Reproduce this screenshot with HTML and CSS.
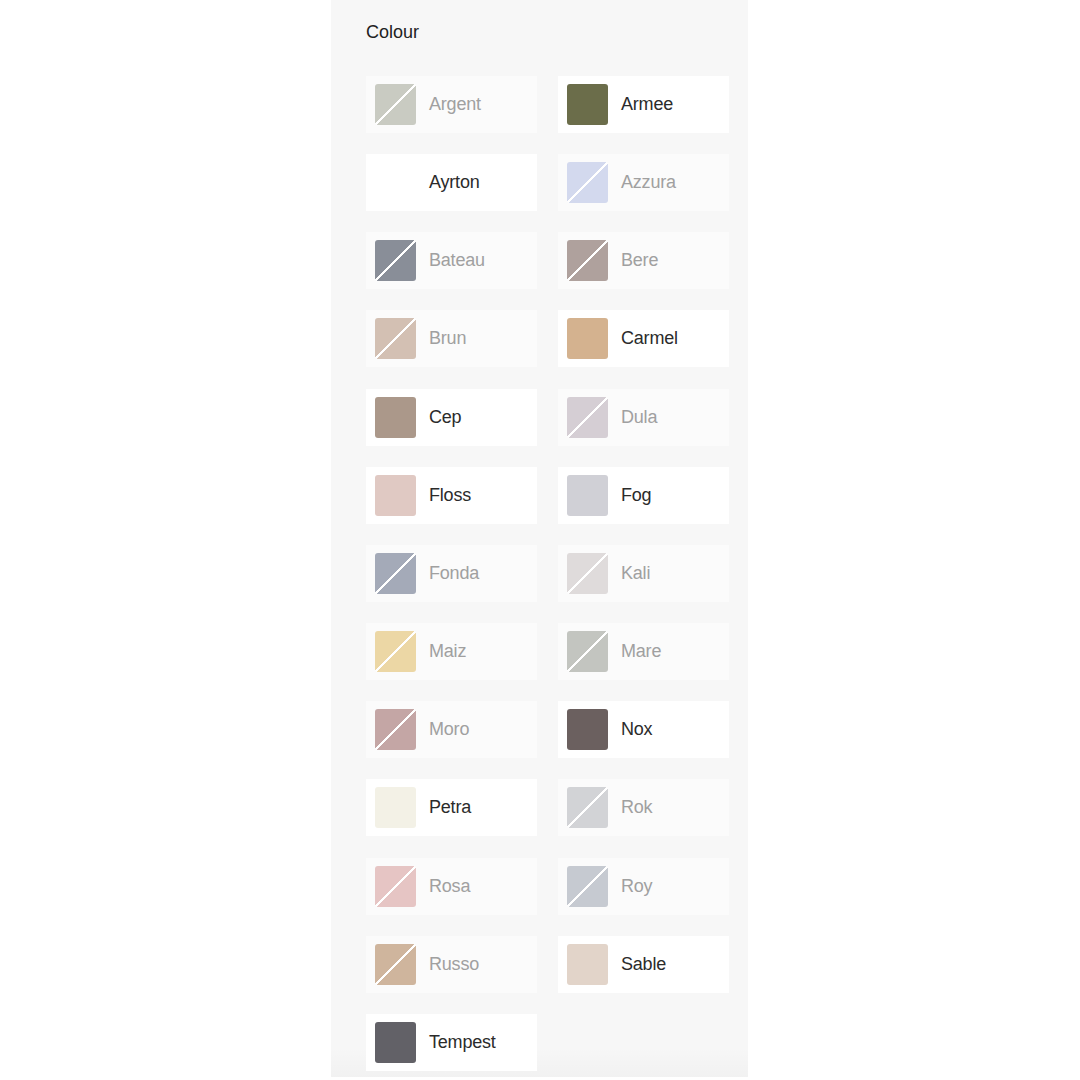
FILE: index.html
```html
<!DOCTYPE html>
<html lang="en">
<head>
    <meta charset="UTF-8">
    <meta name="viewport" content="width=device-width, initial-scale=1.0">
    <title>Colour</title>
    <link rel="stylesheet" href="styles.css">
</head>
<body>
    <section class="picker">
        <h2 class="picker-title">Colour</h2>

        <!-- Swatches: .sold-out ones get the struck-through look -->
        <ul class="swatch-grid">
            <li class="swatch-card sold-out"><span class="swatch" style="background-color: #c9cbc2;"></span><span class="swatch-name">Argent</span></li>
            <li class="swatch-card"><span class="swatch" style="background-color: #6b6d4a;"></span><span class="swatch-name">Armee</span></li>
            <li class="swatch-card"><span class="swatch" style="background-color: #ffffff;"></span><span class="swatch-name">Ayrton</span></li>
            <li class="swatch-card sold-out"><span class="swatch" style="background-color: #d3d9ee;"></span><span class="swatch-name">Azzura</span></li>
            <li class="swatch-card sold-out"><span class="swatch" style="background-color: #898e98;"></span><span class="swatch-name">Bateau</span></li>
            <li class="swatch-card sold-out"><span class="swatch" style="background-color: #afa19d;"></span><span class="swatch-name">Bere</span></li>
            <li class="swatch-card sold-out"><span class="swatch" style="background-color: #d3c0b3;"></span><span class="swatch-name">Brun</span></li>
            <li class="swatch-card"><span class="swatch" style="background-color: #d4b28f;"></span><span class="swatch-name">Carmel</span></li>
            <li class="swatch-card"><span class="swatch" style="background-color: #ab988a;"></span><span class="swatch-name">Cep</span></li>
            <li class="swatch-card sold-out"><span class="swatch" style="background-color: #d5ced4;"></span><span class="swatch-name">Dula</span></li>
            <li class="swatch-card"><span class="swatch" style="background-color: #e0c9c3;"></span><span class="swatch-name">Floss</span></li>
            <li class="swatch-card"><span class="swatch" style="background-color: #d0d0d6;"></span><span class="swatch-name">Fog</span></li>
            <li class="swatch-card sold-out"><span class="swatch" style="background-color: #a4aab8;"></span><span class="swatch-name">Fonda</span></li>
            <li class="swatch-card sold-out"><span class="swatch" style="background-color: #dfdbdb;"></span><span class="swatch-name">Kali</span></li>
            <li class="swatch-card sold-out"><span class="swatch" style="background-color: #ecd7a5;"></span><span class="swatch-name">Maiz</span></li>
            <li class="swatch-card sold-out"><span class="swatch" style="background-color: #c3c5c0;"></span><span class="swatch-name">Mare</span></li>
            <li class="swatch-card sold-out"><span class="swatch" style="background-color: #c4a6a5;"></span><span class="swatch-name">Moro</span></li>
            <li class="swatch-card"><span class="swatch" style="background-color: #6b605f;"></span><span class="swatch-name">Nox</span></li>
            <li class="swatch-card"><span class="swatch" style="background-color: #f3f1e6;"></span><span class="swatch-name">Petra</span></li>
            <li class="swatch-card sold-out"><span class="swatch" style="background-color: #d2d3d6;"></span><span class="swatch-name">Rok</span></li>
            <li class="swatch-card sold-out"><span class="swatch" style="background-color: #e6c5c4;"></span><span class="swatch-name">Rosa</span></li>
            <li class="swatch-card sold-out"><span class="swatch" style="background-color: #c6cad1;"></span><span class="swatch-name">Roy</span></li>
            <li class="swatch-card sold-out"><span class="swatch" style="background-color: #cfb59d;"></span><span class="swatch-name">Russo</span></li>
            <li class="swatch-card"><span class="swatch" style="background-color: #e2d4c9;"></span><span class="swatch-name">Sable</span></li>
            <li class="swatch-card"><span class="swatch" style="background-color: #626167;"></span><span class="swatch-name">Tempest</span></li>
        </ul>
    </section>
</body>
</html>
```

FILE: styles.css
```css
* {
    margin: 0;
    padding: 0;
    box-sizing: border-box;
    font-family: 'Liberation Sans', Arial, sans-serif;
}

html, body {
    width: 100%;
    height: 100%;
    overflow: hidden;
}

body {
    background: #fff;
    display: flex;
    justify-content: center;
}

/* Side panel holding the colour options */
.picker {
    width: 417px;
    min-height: 100%;
    margin-left: -1px;
    padding: 20px 19px 0 35px;
    background:
        linear-gradient(to bottom, rgba(0, 0, 0, 0) 97%, rgba(0, 0, 0, 0.025) 99.7%, #fff 99.7%),
        #f7f7f7;
}

.picker-title {
    font-size: 18px;
    font-weight: 400;
    line-height: 24px;
    color: #222;
    margin-bottom: 32px;
}

.swatch-grid {
    list-style: none;
    display: grid;
    grid-template-columns: 171px 171px;
    column-gap: 21px;
    row-gap: 21.17px;
}

.swatch-card {
    height: 57px;
    padding: 8px 9px;
    display: flex;
    align-items: center;
    gap: 13px;
    background: #fff;
}

.swatch {
    width: 41px;
    height: 41px;
    flex-shrink: 0;
    border-radius: 3px;
}

.swatch-name {
    font-size: 18px;
    color: #2b2b2b;
    letter-spacing: -0.2px;
}

/* Unavailable colours: faded card, grey label, white slash across the chip */
.swatch-card.sold-out {
    background: #fbfbfb;
}

.sold-out .swatch {
    background-image: linear-gradient(
        to bottom right,
        transparent calc(50% - 1px),
        #fff calc(50% - 1px),
        #fff calc(50% + 1px),
        transparent calc(50% + 1px)
    );
}

.sold-out .swatch-name {
    color: #a0a0a0;
}
```
